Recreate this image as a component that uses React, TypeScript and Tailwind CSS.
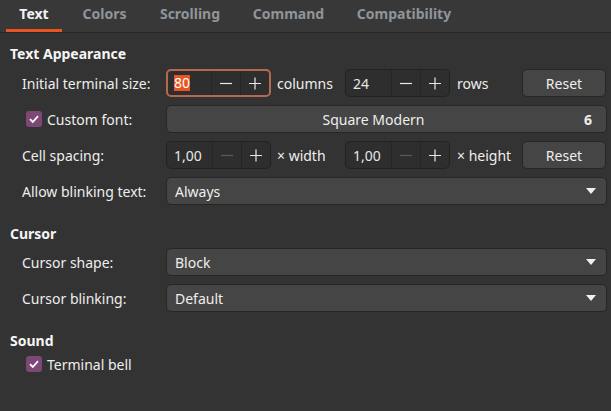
import React from "react";

const font = { fontFamily: '"Noto Sans", "DejaVu Sans", sans-serif' };

function Minus({ dim }: { dim?: boolean }) {
  return (
    <svg width="14" height="14" viewBox="0 0 14 14">
      <path d="M1 7.5H13" stroke={dim ? "#5a5a5a" : "#e8e8e8"} strokeWidth="1.2" />
    </svg>
  );
}
function Plus() {
  return (
    <svg width="14" height="14" viewBox="0 0 14 14">
      <path d="M1 7.5H13M7 1.5V13.5" stroke="#e8e8e8" strokeWidth="1.2" />
    </svg>
  );
}

function Spin({ value, focused, dimMinus }: { value: string; focused?: boolean; dimMinus?: boolean }) {
  return (
    <div
      className={
        "flex h-[28px] w-[105px] rounded-[5px] bg-[#2e2e2e] " +
        (focused ? "border-2 border-[#b4694f]" : "border border-[#222222]")
      }
    >
      <div className={"flex flex-1 items-center " + (focused ? "pl-[6px]" : "pl-[7px]")}>
        {focused ? (
          <span className="bg-[#e95420] text-white leading-[16px] px-[0px]">{value}</span>
        ) : (
          <span className="text-[#e6e6e6]">{value}</span>
        )}
      </div>
      <div className="flex w-[29px] items-center justify-center border-l border-[#262626]">
        <Minus dim={dimMinus} />
      </div>
      <div className="flex w-[29px] items-center justify-center border-l border-[#262626]">
        <Plus />
      </div>
    </div>
  );
}

function Button({ children, className = "" }: { children: React.ReactNode; className?: string }) {
  return (
    <div
      className={
        "flex h-[28px] items-center rounded-[5px] border border-[#262626] bg-[#454545] text-[#eeeeec] " +
        className
      }
    >
      {children}
    </div>
  );
}

function Arrow() {
  return (
    <svg width="10" height="6" viewBox="0 0 10 6">
      <path d="M0 0H10L5 6Z" fill="#f0f0f0" />
    </svg>
  );
}

function Dropdown({ value }: { value: string }) {
  return (
    <Button className="w-[441px] justify-between pl-[8px] pr-[10px]">
      <span>{value}</span>
      <Arrow />
    </Button>
  );
}

function Check() {
  return (
    <div className="flex h-[16px] w-[16px] items-center justify-center rounded-[3px] bg-[#7d4878]">
      <svg width="12" height="12" viewBox="0 0 12 12">
        <path d="M2 6.2L4.8 9L10 3.2" stroke="#ffffff" strokeWidth="1.8" fill="none" />
      </svg>
    </div>
  );
}

function Row({ label, children, check }: { label: string; children: React.ReactNode; check?: boolean }) {
  return (
    <div className="flex h-[28px] items-center">
      <div className="flex w-[166px] items-center pl-[22px]">
        {check ? (
          <div className="flex items-center gap-[5px] pl-[4px]">
            <Check />
            <span>{label}</span>
          </div>
        ) : (
          <span>{label}</span>
        )}
      </div>
      <div className="flex items-center">{children}</div>
    </div>
  );
}

const tabs = [
  { name: "Text", w: "w-[56px]", active: true },
  { name: "Colors", w: "w-[69px]" },
  { name: "Scrolling", w: "w-[86px]" },
  { name: "Command", w: "w-[95px]" },
  { name: "Compatibility", w: "w-[120px]" },
];

export default function App() {
  return (
    <div
      className="h-[411px] w-[611px] overflow-hidden bg-[#333333] text-[14px] text-[#eeeeec]"
      style={font}
    >
      <div className="flex h-[33px] gap-[8px] border-b border-[#262626] bg-[#383838] pl-[6px]">
        {tabs.map((t) => (
          <div
            key={t.name}
            className={
              "flex h-[32px] items-start justify-center pt-[4px] font-bold leading-[20px] " +
              t.w +
              (t.active ? " border-b-[3px] border-[#e95420] text-[#f2f2f2]" : " text-[#8f959a]")
            }
          >
            {t.name}
          </div>
        ))}
      </div>

      <div className="flex flex-col pt-[10px]">
        <div className="flex h-[20px] items-center pl-[10px] font-bold text-[#f5f5f5]">Text Appearance</div>
        <div className="mt-[6px] flex flex-col gap-[8px]">
          <Row label="Initial terminal size:">
            <Spin value="80" focused />
            <span className="w-[74px] pl-[6px]">columns</span>
            <Spin value="24" />
            <span className="w-[72px] pl-[7px]">rows</span>
            <Button className="w-[84px] justify-center">Reset</Button>
          </Row>
          <Row label="Custom font:" check>
            <Button className="w-[441px] justify-between pr-[14px]">
              <span className="flex-1 text-center pr-[4px]">Square Modern</span>
              <span className="font-bold">6</span>
            </Button>
          </Row>
          <Row label="Cell spacing:">
            <Spin value="1,00" dimMinus />
            <span className="w-[74px] pl-[6px]">× width</span>
            <Spin value="1,00" dimMinus />
            <span className="w-[72px] pl-[7px]">× height</span>
            <Button className="w-[84px] justify-center">Reset</Button>
          </Row>
          <Row label="Allow blinking text:">
            <Dropdown value="Always" />
          </Row>
        </div>

        <div className="mt-[18px] flex h-[20px] items-center pl-[10px] font-bold text-[#f5f5f5]">Cursor</div>
        <div className="mt-[5px] flex flex-col gap-[8px]">
          <Row label="Cursor shape:">
            <Dropdown value="Block" />
          </Row>
          <Row label="Cursor blinking:">
            <Dropdown value="Default" />
          </Row>
        </div>

        <div className="mt-[18px] flex h-[20px] items-center pl-[10px] font-bold text-[#f5f5f5]">Sound</div>
        <div className="mt-[4px] flex h-[20px] items-center gap-[5px] pl-[26px]">
          <Check />
          <span>Terminal bell</span>
        </div>
      </div>
    </div>
  );
}
